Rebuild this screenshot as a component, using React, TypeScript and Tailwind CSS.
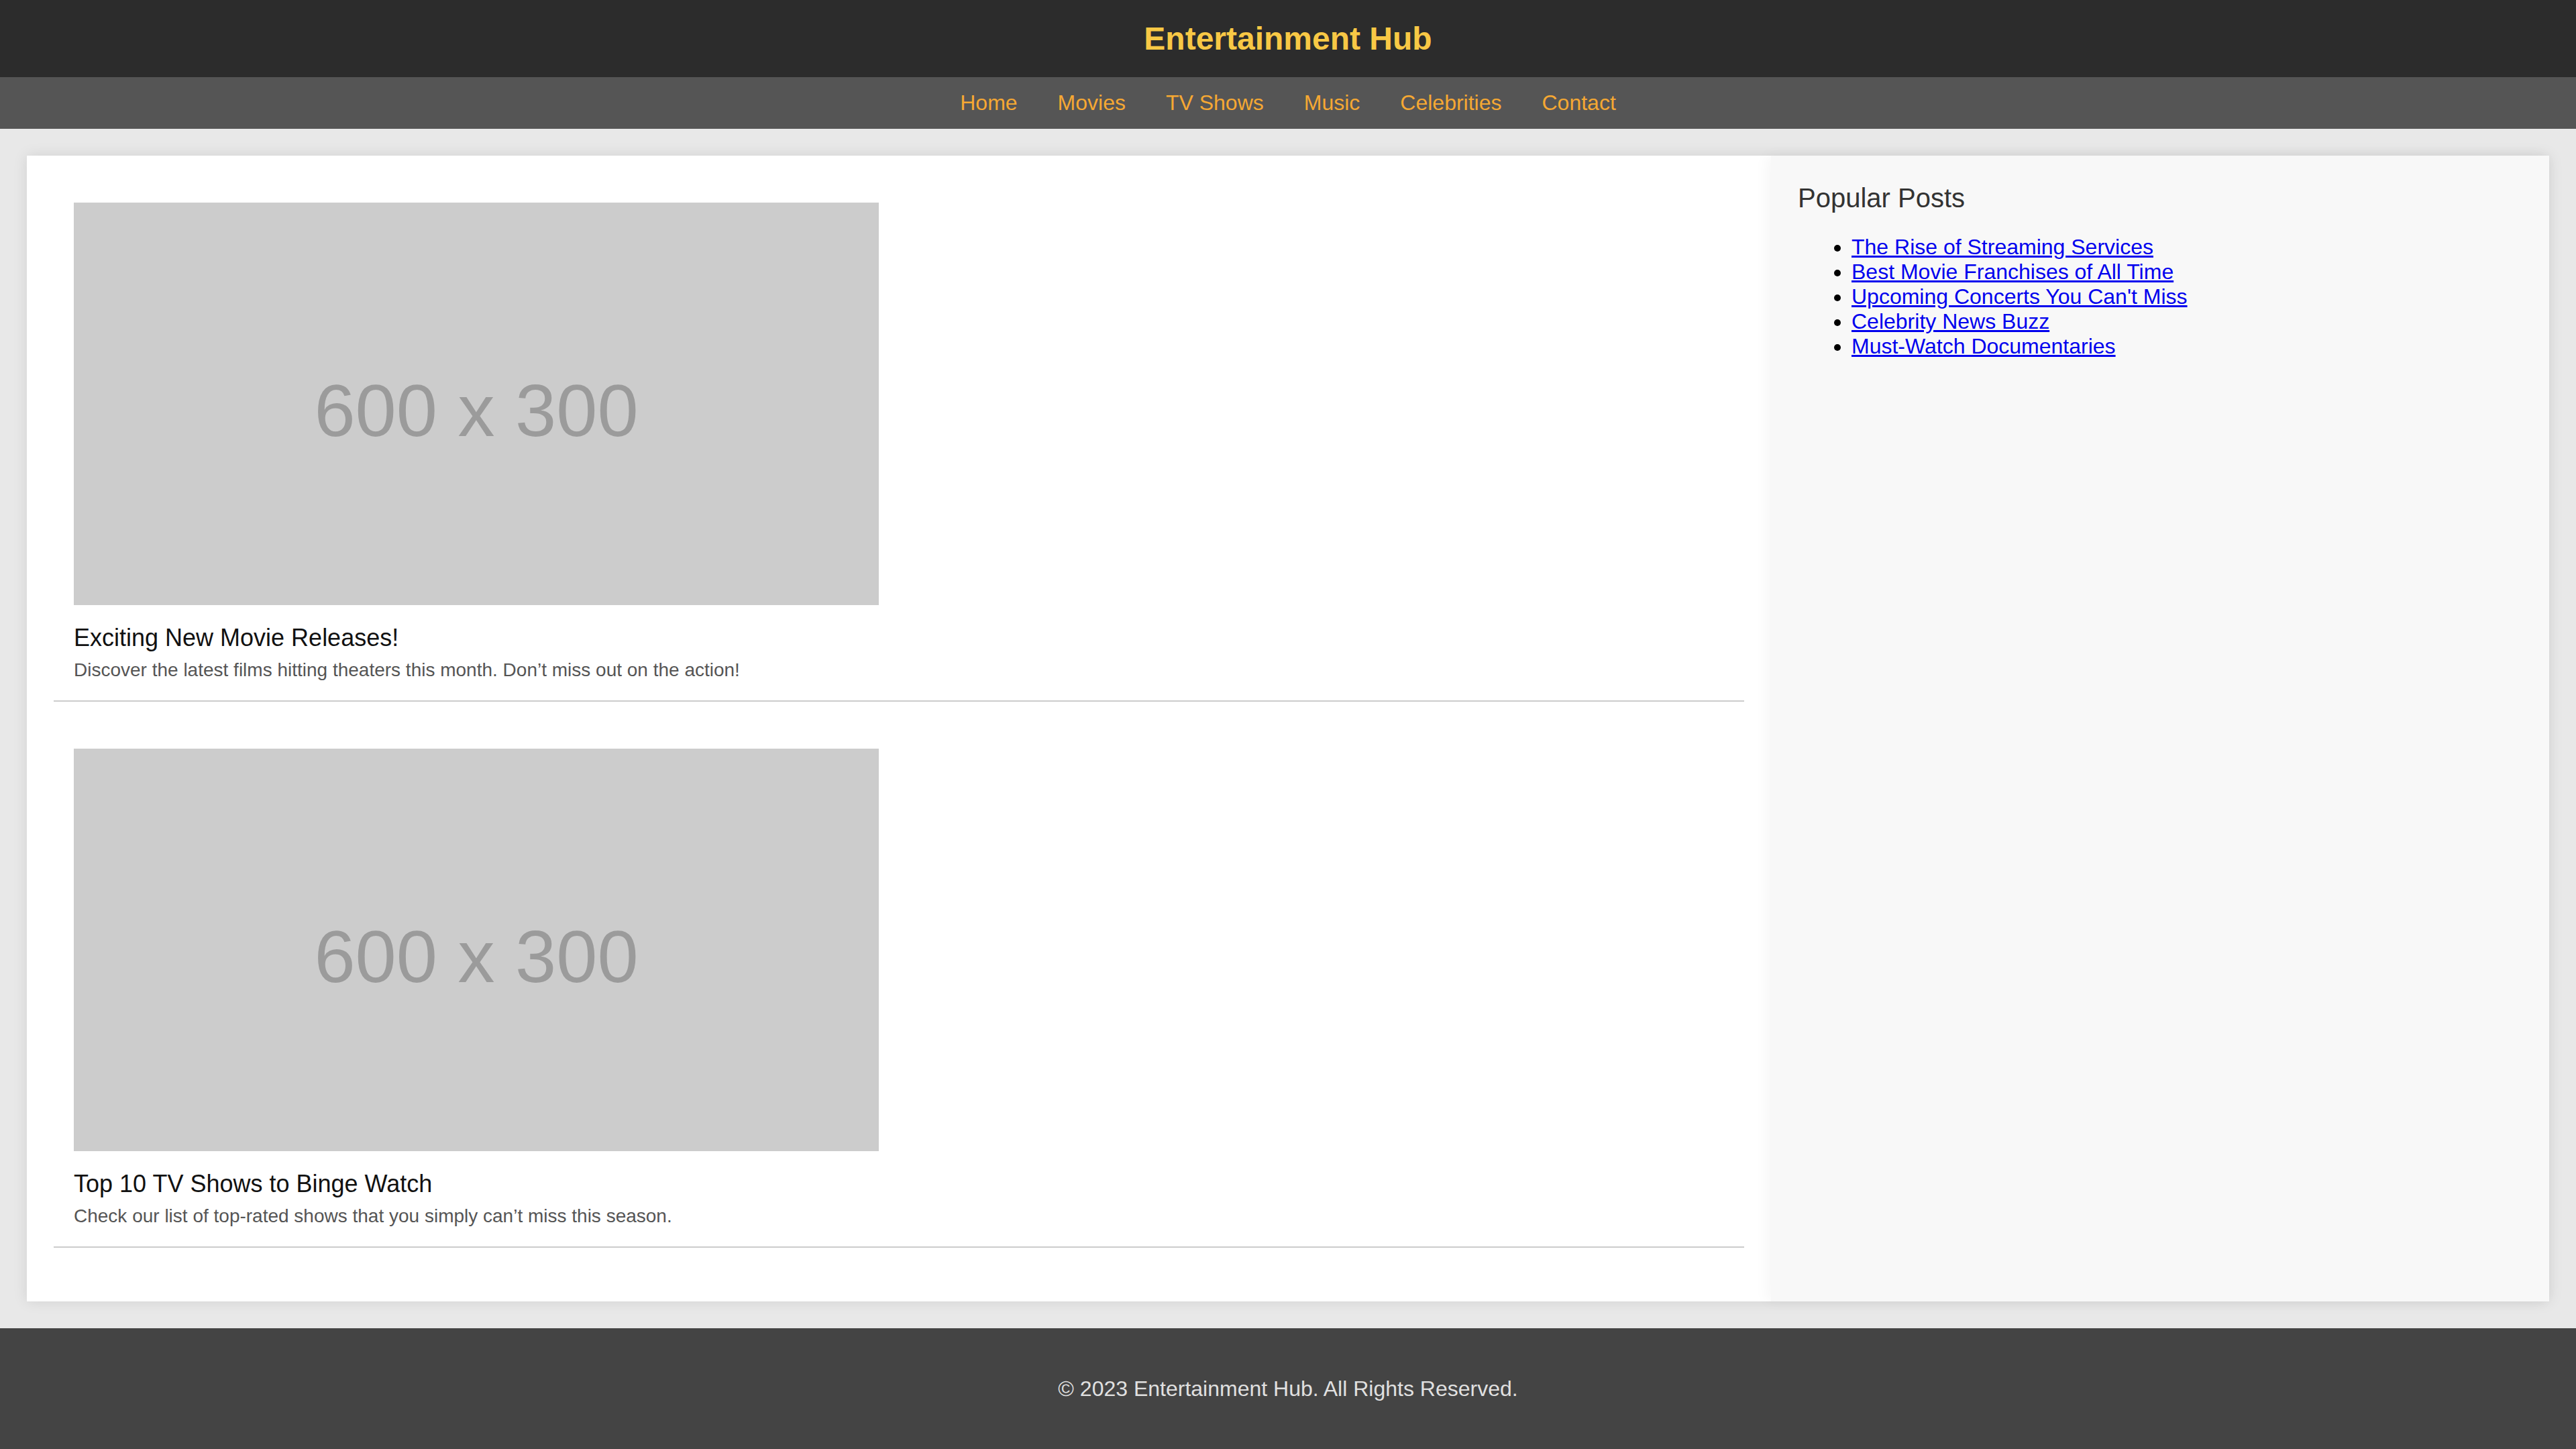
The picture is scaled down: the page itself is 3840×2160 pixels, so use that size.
const NAV_LINKS = ["Home", "Movies", "TV Shows", "Music", "Celebrities", "Contact"];

const ARTICLES = [
  {
    title: "Exciting New Movie Releases!",
    text: "Discover the latest films hitting theaters this month. Don’t miss out on the action!",
  },
  {
    title: "Top 10 TV Shows to Binge Watch",
    text: "Check our list of top-rated shows that you simply can’t miss this season.",
  },
];

const POPULAR = [
  "The Rise of Streaming Services",
  "Best Movie Franchises of All Time",
  "Upcoming Concerts You Can't Miss",
  "Celebrity News Buzz",
  "Must-Watch Documentaries",
];

function Placeholder() {
  return (
    <div className="w-[1200px] h-[600px] bg-[#cccccc] flex items-center justify-center pt-[20px] text-[110px] leading-none text-[#9b9b9b]">
      600 x 300
    </div>
  );
}

export default function App() {
  return (
    <div className="min-h-screen bg-[#e8e8e8] font-['Liberation_Sans',Arial,sans-serif]">
      <header className="h-[115px] bg-[#2c2c2c] flex items-center justify-center">
        <h1 className="text-[48px] leading-[55px] font-bold text-[#f8c845]">Entertainment Hub</h1>
      </header>

      <nav className="h-[77px] bg-[#555555] flex items-center justify-center">
        {NAV_LINKS.map((link) => (
          <a key={link} href="#" className="mx-[30px] text-[32px] leading-[37px] text-[#f5a833]">
            {link}
          </a>
        ))}
      </nav>

      <div className="mx-[40px] mt-[40px] flex bg-white shadow-[0_0_20px_rgba(0,0,0,0.1)]">
        <main className="w-[2600px] p-[40px]">
          {ARTICLES.map((article) => (
            <article key={article.title} className="px-[30px] pt-[30px] pb-[29px] mb-[40px] border-b-2 border-[#cccccc]">
              <Placeholder />
              <h2 className="mt-[28px] text-[36px] leading-[41px] text-[#111111]">{article.title}</h2>
              <p className="mt-[12px] text-[28px] leading-[32px] text-[#555555]">{article.text}</p>
            </article>
          ))}
        </main>

        <aside className="flex-1 bg-[#f8f8f8] p-[40px] shadow-[-6px_0_20px_rgba(0,0,0,0.04)]">
          <h3 className="text-[40px] leading-[46px] text-[#333333]">Popular Posts</h3>
          <ul className="mt-[32px] pl-[80px] list-disc text-black">
            {POPULAR.map((post) => (
              <li key={post} className="text-[32px] leading-[37px]">
                <a href="#" className="text-[#0000ee] underline">
                  {post}
                </a>
              </li>
            ))}
          </ul>
        </aside>
      </div>

      <footer className="mt-[40px] h-[180px] bg-[#444444] flex items-center justify-center text-[32px] text-[#e0e0e0]">
        © 2023 Entertainment Hub. All Rights Reserved.
      </footer>
    </div>
  );
}
